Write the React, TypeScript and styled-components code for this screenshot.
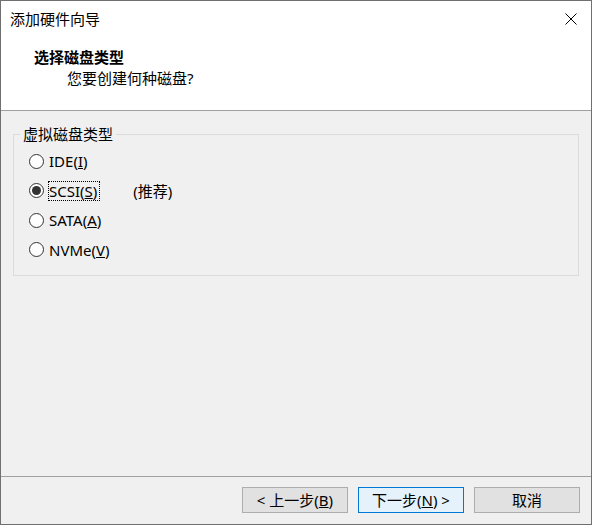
import React from "react";
import styled, { createGlobalStyle } from "styled-components";

const Global = createGlobalStyle`
  html, body { margin: 0; padding: 0; background: #f0f0f0; }
  * { box-sizing: border-box; }
  body { font-family: "Noto Sans", "Noto Sans CJK SC", sans-serif; font-size: 15px; color: #000; }
`;

const Window = styled.div`
  width: 592px;
  height: 525px;
  border: 1px solid #707070;
  display: flex;
  flex-direction: column;
  background: #f0f0f0;
`;

const TitleBar = styled.div`
  height: 36px;
  background: #fff;
  display: flex;
  align-items: center;
  padding-left: 9px;
`;

const TitleText = styled.div`
  flex: 1;
  line-height: 36px;
  font-size: 15px;
`;

const CloseButton = styled.div`
  width: 40px;
  height: 36px;
  display: flex;
  align-items: center;
  justify-content: center;
`;

const Header = styled.div`
  height: 74px;
  background: #fff;
  border-bottom: 1px solid #a0a0a0;
  padding: 10px 0 0 33px;
`;

const HeaderTitle = styled.div`
  font-weight: bold;
  line-height: 20px;
  font-size: 15px;
`;

const HeaderSub = styled.div`
  line-height: 20px;
  margin: 1px 0 0 33px;
`;

const Body = styled.div`
  flex: 1;
  padding: 13px 12px 0 12px;
`;

const GroupBox = styled.fieldset`
  margin: 0;
  padding: 0 0 15px 0;
  border: 1px solid #dcdcdc;
  min-width: 0;
`;

const Legend = styled.legend`
  margin-left: 6px;
  padding: 0 3px;
  line-height: 20px;
`;

const RadioList = styled.div`
  display: flex;
  flex-direction: column;
  gap: 9.5px;
  padding: 7px 0 0 15px;
`;

const RadioRow = styled.label`
  display: flex;
  align-items: center;
  height: 20px;
`;

const Circle = styled.span<{ $checked?: boolean }>`
  width: 15px;
  height: 15px;
  border-radius: 50%;
  border: 1px solid #333;
  background: #fff;
  display: flex;
  align-items: center;
  justify-content: center;
  margin-right: 5px;
  &::after {
    content: "";
    display: ${(p) => (p.$checked ? "block" : "none")};
    width: 9px;
    height: 9px;
    border-radius: 50%;
    background: #333;
  }
`;

const RadioText = styled.span<{ $focused?: boolean }>`
  line-height: 18px;
  padding: 0 2px 0 0;
  outline: ${(p) => (p.$focused ? "1px dotted #000" : "none")};
  outline-offset: 0;
`;

const Note = styled.span`
  margin-left: 34px;
  line-height: 18px;
`;

const U = styled.span`
  text-decoration: underline;
`;

const Footer = styled.div`
  height: 48px;
  border-top: 1px solid #a0a0a0;
  display: flex;
  justify-content: flex-end;
  align-items: flex-start;
  gap: 10px;
  padding: 10px 11px 0 0;
`;

const Button = styled.div<{ $primary?: boolean }>`
  width: 106px;
  height: 26px;
  display: flex;
  align-items: center;
  justify-content: center;
  white-space: pre;
  background: ${(p) => (p.$primary ? "#e5f1fb" : "#e1e1e1")};
  border: 1px solid ${(p) => (p.$primary ? "#0078d7" : "#adadad")};
  font-size: 15px;
  line-height: 20px;
`;

const options = [
  { key: "ide", pre: "IDE(", acc: "I", post: ")" },
  { key: "scsi", pre: "SCSI(", acc: "S", post: ")", checked: true, note: "(推荐)" },
  { key: "sata", pre: "SATA(", acc: "A", post: ")" },
  { key: "nvme", pre: "NVMe(", acc: "V", post: ")" },
];

export default function App() {
  return (
    <>
      <Global />
      <Window>
        <TitleBar>
          <TitleText>添加硬件向导</TitleText>
          <CloseButton>
            <svg width="12" height="12" viewBox="0 0 12 12">
              <path d="M0.5 0.5 L11.5 11.5 M11.5 0.5 L0.5 11.5" stroke="#000" strokeWidth="1" fill="none" />
            </svg>
          </CloseButton>
        </TitleBar>
        <Header>
          <HeaderTitle>选择磁盘类型</HeaderTitle>
          <HeaderSub>您要创建何种磁盘?</HeaderSub>
        </Header>
        <Body>
          <GroupBox>
            <Legend>虚拟磁盘类型</Legend>
            <RadioList>
              {options.map((o) => (
                <RadioRow key={o.key}>
                  <Circle $checked={o.checked} />
                  <RadioText $focused={o.checked}>
                    {o.pre}
                    <U>{o.acc}</U>
                    {o.post}
                  </RadioText>
                  {o.note && <Note>{o.note}</Note>}
                </RadioRow>
              ))}
            </RadioList>
          </GroupBox>
        </Body>
        <Footer>
          <Button>
            {"< 上一步("}<U>B</U>{")"}
          </Button>
          <Button $primary>
            {"下一步("}<U>N</U>{") >"}
          </Button>
          <Button>取消</Button>
        </Footer>
      </Window>
    </>
  );
}
